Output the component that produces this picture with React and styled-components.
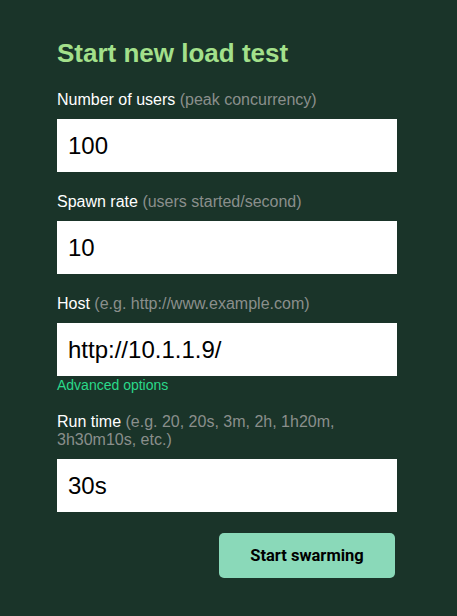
import React from 'react';
import styled, { createGlobalStyle } from 'styled-components';

const GlobalStyle = createGlobalStyle`
    html, body {
        margin: 0;
        padding: 0;
        background: #1a3429;
        font-family: "Liberation Sans", Arial, sans-serif;
    }
`;

const Wrapper = styled.div`
    width: 457px;
    min-height: 616px;
    box-sizing: border-box;
    padding: 38px 60px 0 57px;
`;

const Heading = styled.h2`
    margin: 0 0 23px 0;
    font-size: 26px;
    line-height: 30px;
    font-weight: bold;
    color: #a3e08b;
`;

const Form = styled.form`
    display: flex;
    flex-direction: column;
`;

const Field = styled.div`
    display: flex;
    flex-direction: column;
    margin-bottom: ${(props) => (props.tight ? '1px' : '21px')};
`;

const Label = styled.label`
    font-size: 16px;
    line-height: 18px;
    color: #ffffff;
    margin-bottom: 10px;
`;

const Hint = styled.span`
    color: #8a8f8c;
`;

const Input = styled.input`
    box-sizing: border-box;
    width: 340px;
    height: 53px;
    border: none;
    outline: none;
    padding: 0 11px;
    font-family: "Liberation Sans", Arial, sans-serif;
    font-size: 24px;
    color: #000000;
    background: #ffffff;
`;

const Advanced = styled.a`
    font-size: 14px;
    line-height: 16px;
    color: #2ad98a;
    text-decoration: none;
    margin-bottom: 20px;
`;

const Actions = styled.div`
    display: flex;
    justify-content: flex-end;
    padding-right: 2px;
`;

const Button = styled.button`
    width: 176px;
    height: 45px;
    border: none;
    border-radius: 5px;
    background: #8ad9b9;
    color: #000000;
    font-family: Roboto, "Liberation Sans", sans-serif;
    font-weight: bold;
    font-size: 16.5px;
    cursor: pointer;
`;

const App = () => {
    return (
        <Wrapper>
            <GlobalStyle />
            <Heading>Start new load test</Heading>
            <Form onSubmit={(e) => e.preventDefault()}>
                <Field>
                    <Label>Number of users <Hint>(peak concurrency)</Hint></Label>
                    <Input defaultValue="100" />
                </Field>
                <Field>
                    <Label>Spawn rate <Hint>(users started/second)</Hint></Label>
                    <Input defaultValue="10" />
                </Field>
                <Field tight>
                    <Label>Host <Hint>(e.g. http://www.example.com)</Hint></Label>
                    <Input defaultValue="http://10.1.1.9/" />
                </Field>
                <Advanced href="#">Advanced options</Advanced>
                <Field>
                    <Label>
                        Run time <Hint>(e.g. 20, 20s, 3m, 2h, 1h20m, 3h30m10s, etc.)</Hint>
                    </Label>
                    <Input defaultValue="30s" />
                </Field>
                <Actions>
                    <Button type="submit">Start swarming</Button>
                </Actions>
            </Form>
        </Wrapper>
    );
};

export default App;
